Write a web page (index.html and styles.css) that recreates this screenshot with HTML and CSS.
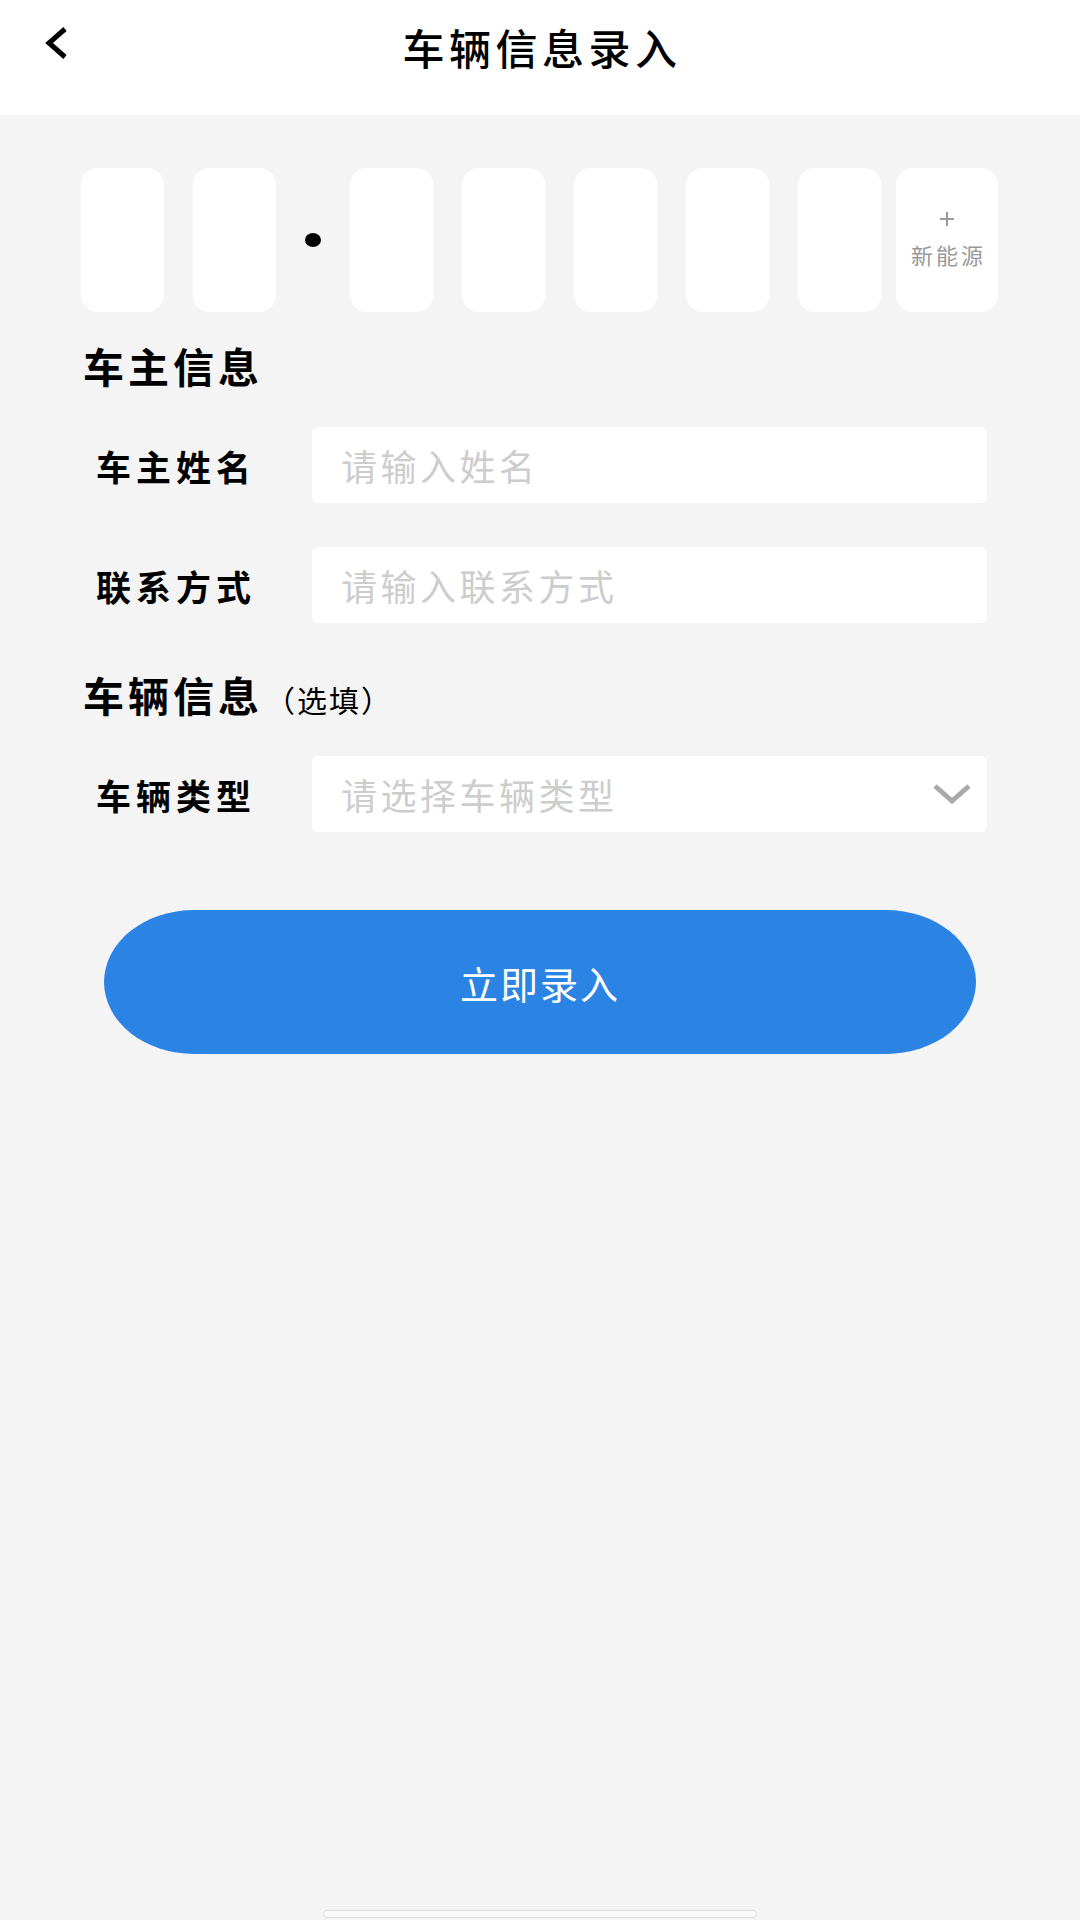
FILE: index.html
```html
<!DOCTYPE html>
<html lang="zh-CN">
<head>
<meta charset="utf-8" />
<title>车辆信息录入</title>
<link rel="stylesheet" href="styles.css">
</head>
<body>
<div class="page">
  <div class="header">
    <svg class="back" width="26" height="34" viewBox="0 0 26 34">
      <polyline points="21,3 5,17 21,31" fill="none" stroke="#000" stroke-width="5" />
    </svg>
    <div class="title">车辆信息录入</div>
  </div>

  <div class="plate">
    <div class="cell"></div>
    <div class="cell"></div>
    <div class="dot"></div>
    <div class="cell"></div>
    <div class="cell"></div>
    <div class="cell"></div>
    <div class="cell"></div>
    <div class="cell"></div>
    <div class="cell energy">
      <svg width="16" height="16" viewBox="0 0 16 16">
        <path d="M8 1V15M1 8H15" stroke="#9a9a9a" stroke-width="2" />
      </svg>
      <span>新能源</span>
    </div>
  </div>

  <div class="section">车主信息</div>
  <div class="row">
    <div class="label">车主姓名</div>
    <input class="field" type="text" placeholder="请输入姓名" />
  </div>
  <div class="row second">
    <div class="label">联系方式</div>
    <input class="field" type="text" placeholder="请输入联系方式" />
  </div>

  <div class="section gap">车辆信息<span class="optional">（选填）</span></div>
  <div class="row third">
    <div class="label">车辆类型</div>
    <div class="field select">
      <span class="hint">请选择车辆类型</span>
      <svg width="40" height="22" viewBox="0 0 40 22">
        <polyline points="3,3 20,18 37,3" fill="none" stroke="#a9a9a9" stroke-width="5" />
      </svg>
    </div>
  </div>

  <div class="submit">立即录入</div>

  <div class="home-bar"></div>
</div>
</body>
</html>
```

FILE: styles.css
```css
body {
  margin: 0;
  background: #f4f4f4;
  font-family: "Noto Sans CJK SC", "Noto Sans", sans-serif;
  color: #000;
}

.page {
  min-height: 1920px;
  display: flex;
  flex-direction: column;
}

/* top bar */
.header {
  height: 115px;
  box-sizing: border-box;
  background: #fff;
  padding-top: 19px;
  display: grid;
  grid-template-columns: 1fr auto 1fr;
  align-items: start;
}
.back {
  margin-top: 7px;
  margin-left: 44px;
}
.title {
  grid-column: 2;
  font-size: 42px;
  line-height: 56px;
  letter-spacing: 4.5px;
  margin-right: -4px;
  font-weight: 500;
}

/* licence plate cells */
.plate {
  display: flex;
  align-items: center;
  gap: 29px;
  margin-top: 53px;
  padding-left: 81px;
}
.cell {
  width: 83px;
  height: 144px;
  background: #fff;
  border-radius: 17px;
}
.dot {
  width: 16px;
  height: 14px;
  border-radius: 50%;
  background: #000;
}
.cell.energy {
  width: 102px;
  margin-left: -14px;
  display: flex;
  flex-direction: column;
  align-items: center;
  justify-content: center;
  gap: 12px;
  color: #999;
  font-size: 22px;
  line-height: 30px;
  letter-spacing: 3px;
}
.cell.energy span {
  margin-right: -3px;
}

/* form */
.section {
  font-size: 41px;
  line-height: 56px;
  letter-spacing: 4px;
  font-weight: 700;
  margin-top: 25px;
  padding-left: 83px;
}
.section.gap {
  margin-top: 43px;
}
.optional {
  font-size: 30px;
  font-weight: 400;
  letter-spacing: 2px;
  margin-left: 2px;
}
.row {
  display: flex;
  align-items: center;
  margin-top: 34px;
  padding-left: 96px;
}
.row.second {
  margin-top: 44px;
}
.row.third {
  margin-top: 29px;
}
.label {
  width: 216px;
  font-size: 35px;
  letter-spacing: 5px;
  font-weight: 700;
}
.field {
  width: 675px;
  height: 76px;
  box-sizing: border-box;
  border: none;
  outline: none;
  border-radius: 6px;
  background: #fff;
  padding: 0 0 0 29px;
  font-family: inherit;
  font-size: 36px;
  letter-spacing: 3.5px;
  color: #333;
}
.field::placeholder,
.hint {
  color: #cdcdcd;
}
.select {
  display: flex;
  align-items: center;
  justify-content: space-between;
  padding-right: 15px;
}

.submit {
  margin: 78px 0 0 104px;
  width: 872px;
  height: 144px;
  border-radius: 90px / 72px;
  background: #2b84e4;
  color: #fff;
  font-size: 38px;
  letter-spacing: 2px;
  display: flex;
  align-items: center;
  justify-content: center;
}

.home-bar {
  margin: auto auto 2px;
  width: 434px;
  height: 8px;
  box-sizing: border-box;
  background: #f9f9f9;
  border: 1px solid #dcdcdc;
  border-radius: 4px;
}
```
